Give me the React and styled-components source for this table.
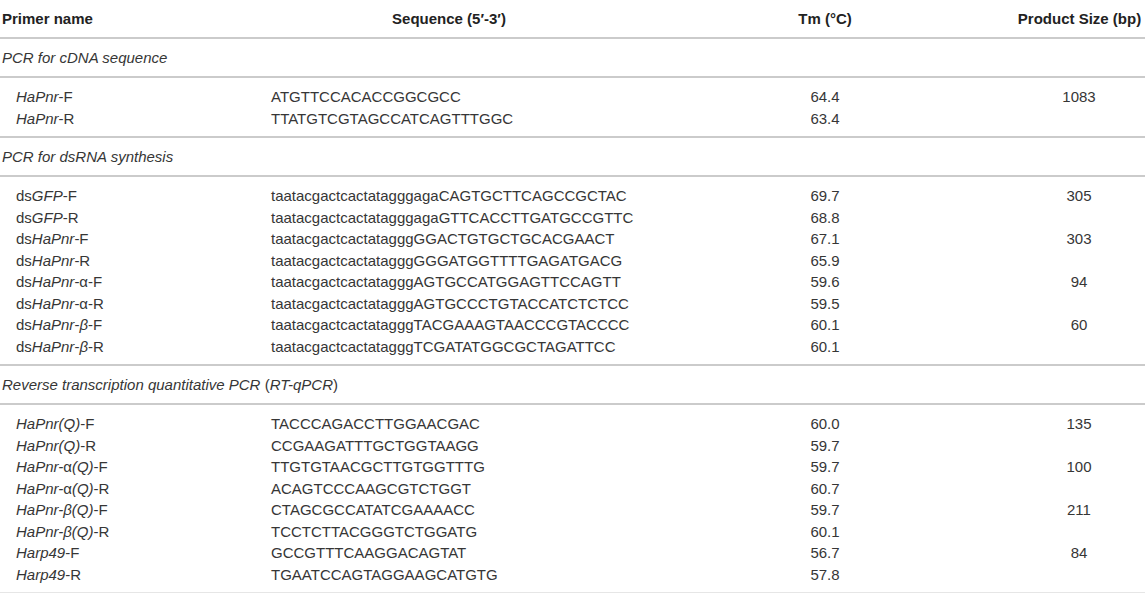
import React from 'react';
import styled, { createGlobalStyle } from 'styled-components';

const GlobalStyle = createGlobalStyle`
  html, body {
    margin: 0;
    padding: 0;
    background: #fff;
  }
  body {
    font-family: 'Liberation Sans', Arial, Helvetica, sans-serif;
    color: #363636;
  }
`;

const Table = styled.table`
  width: 1145px;
  border-collapse: collapse;
  table-layout: fixed;
  font-size: 15px;
`;

const HeadCell = styled.th`
  height: 37px;
  padding: 0 0 0 ${({ $left }) => ($left ? '2px' : '0')};
  text-align: ${({ $left }) => ($left ? 'left' : 'center')};
  font-weight: bold;
  color: #222;
  border-bottom: 2px solid #cbcbcb;
  white-space: nowrap;
`;

const TitleCell = styled.td`
  height: 37px;
  padding: 0 0 0 2px;
  font-style: italic;
  border-bottom: 2px solid #cbcbcb;
  white-space: nowrap;
  span {
    font-style: normal;
  }
`;

const Row = styled.tr`
  td {
    line-height: 21.5px;
    padding-top: ${({ $first }) => ($first ? '8px' : '0')};
    padding-bottom: ${({ $last }) => ($last ? '7px' : '0')};
    border-bottom: ${({ $last, $end }) =>
      $last ? ($end ? '1px solid #e6e6e6' : '2px solid #cbcbcb') : 'none'};
  }
`;

const NameCell = styled.td`
  padding-left: 16px;
  white-space: nowrap;
`;

const SeqCell = styled.td`
  padding-left: 9px;
  white-space: nowrap;
`;

const TmCell = styled.td`
  text-align: center;
`;

const SizeCell = styled.td`
  text-align: center;
  padding-right: 2px;
`;

const Up = styled.span`
  font-style: normal;
`;

const sections = [
  {
    title: <i>PCR for cDNA sequence</i>,
    rows: [
      [<><i>HaPnr</i>-F</>, 'ATGTTCCACACCGGCGCC', '64.4', '1083'],
      [<><i>HaPnr</i>-R</>, 'TTATGTCGTAGCCATCAGTTTGGC', '63.4', '']
    ]
  },
  {
    title: <i>PCR for dsRNA synthesis</i>,
    rows: [
      [<>ds<i>GFP</i>-F</>, 'taatacgactcactatagggagaCAGTGCTTCAGCCGCTAC', '69.7', '305'],
      [<>ds<i>GFP</i>-R</>, 'taatacgactcactatagggagaGTTCACCTTGATGCCGTTC', '68.8', ''],
      [<>ds<i>HaPnr</i>-F</>, 'taatacgactcactatagggGGACTGTGCTGCACGAACT', '67.1', '303'],
      [<>ds<i>HaPnr</i>-R</>, 'taatacgactcactatagggGGGATGGTTTTGAGATGACG', '65.9', ''],
      [<>ds<i>HaPnr</i>-α-F</>, 'taatacgactcactatagggAGTGCCATGGAGTTCCAGTT', '59.6', '94'],
      [<>ds<i>HaPnr</i>-α-R</>, 'taatacgactcactatagggAGTGCCCTGTACCATCTCTCC', '59.5', ''],
      [<>ds<i>HaPnr</i>-<i>β</i>-F</>, 'taatacgactcactatagggTACGAAAGTAACCCGTACCCC', '60.1', '60'],
      [<>ds<i>HaPnr</i>-<i>β</i>-R</>, 'taatacgactcactatagggTCGATATGGCGCTAGATTCC', '60.1', '']
    ]
  },
  {
    title: (
      <>
        <i>Reverse transcription quantitative PCR</i> <span>(</span><i>RT-qPCR</i><span>)</span>
      </>
    ),
    rows: [
      [<><i>HaPnr(Q)</i>-F</>, 'TACCCAGACCTTGGAACGAC', '60.0', '135'],
      [<><i>HaPnr(Q)</i>-R</>, 'CCGAAGATTTGCTGGTAAGG', '59.7', ''],
      [<><i>HaPnr-<Up>α</Up>(Q)</i>-F</>, 'TTGTGTAACGCTTGTGGTTTG', '59.7', '100'],
      [<><i>HaPnr-<Up>α</Up>(Q)</i>-R</>, 'ACAGTCCCAAGCGTCTGGT', '60.7', ''],
      [<><i>HaPnr-β(Q)</i>-F</>, 'CTAGCGCCATATCGAAAACC', '59.7', '211'],
      [<><i>HaPnr-β(Q)</i>-R</>, 'TCCTCTTACGGGTCTGGATG', '60.1', ''],
      [<><i>Harp49</i>-F</>, 'GCCGTTTCAAGGACAGTAT', '56.7', '84'],
      [<><i>Harp49</i>-R</>, 'TGAATCCAGTAGGAAGCATGTG', '57.8', '']
    ]
  }
];

export default function App() {
  return (
    <>
      <GlobalStyle />
      <Table>
        <colgroup>
          <col style={{ width: 262 }} />
          <col style={{ width: 374 }} />
          <col style={{ width: 378 }} />
          <col style={{ width: 131 }} />
        </colgroup>
        <thead>
          <tr>
            <HeadCell $left>Primer name</HeadCell>
            <HeadCell>Sequence (5′-3′)</HeadCell>
            <HeadCell>Tm (°C)</HeadCell>
            <HeadCell>Product Size (bp)</HeadCell>
          </tr>
        </thead>
        {sections.map((s, si) => (
          <tbody key={si}>
            <tr>
              <TitleCell colSpan={4}>{s.title}</TitleCell>
            </tr>
            {s.rows.map((r, ri) => (
              <Row
                key={ri}
                $first={ri === 0}
                $last={ri === s.rows.length - 1}
                $end={si === sections.length - 1}
              >
                <NameCell>{r[0]}</NameCell>
                <SeqCell>{r[1]}</SeqCell>
                <TmCell>{r[2]}</TmCell>
                <SizeCell>{r[3]}</SizeCell>
              </Row>
            ))}
          </tbody>
        ))}
      </Table>
    </>
  );
}
